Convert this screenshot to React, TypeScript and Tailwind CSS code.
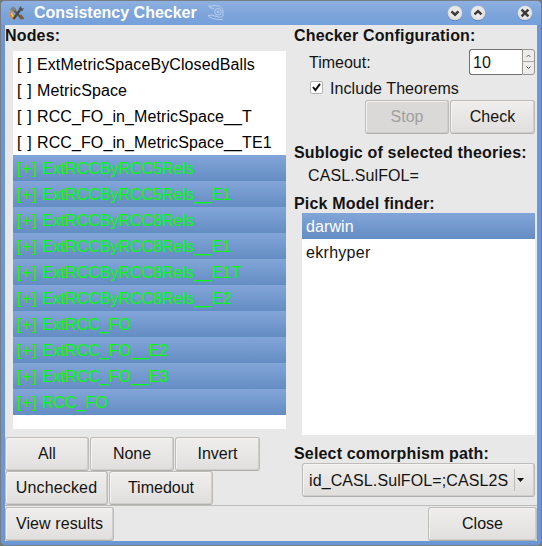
import type { ReactNode } from "react";

const openNodes = [
  "ExtMetricSpaceByClosedBalls",
  "MetricSpace",
  "RCC_FO_in_MetricSpace__T",
  "RCC_FO_in_MetricSpace__TE1",
];

const provedNodes = [
  "ExtRCCByRCC5Rels",
  "ExtRCCByRCC5Rels__E1",
  "ExtRCCByRCC8Rels",
  "ExtRCCByRCC8Rels__E1",
  "ExtRCCByRCC8Rels__E1T",
  "ExtRCCByRCC8Rels__E2",
  "ExtRCC_FO",
  "ExtRCC_FO__E2",
  "ExtRCC_FO__E3",
  "RCC_FO",
];

function Button({ className, children, disabled = false }: { className: string; children: ReactNode; disabled?: boolean }) {
  return (
    <button
      disabled={disabled}
      className={`${className} h-[34px] shrink-0 rounded-[3px] border border-[#bdbcb9] border-b-[#b0afac] text-center whitespace-nowrap shadow-[inset_1px_1px_0_#f4f3f2,inset_-1px_-1px_0_#cfcecb] ${
        disabled ? "bg-[#dad9d7] text-[#a09f9d]" : "bg-linear-to-b from-[#efeeed] to-[#e0dfdd]"
      }`}
    >
      {children}
    </button>
  );
}

function Heading({ className = "", children }: { className?: string; children: ReactNode }) {
  return <h2 className={`${className} h-5 shrink-0 leading-5 font-bold tracking-[0.17px] whitespace-nowrap`}>{children}</h2>;
}

function TitleButton({ path, className }: { path: string; className: string }) {
  return (
    <svg className={`${className} size-4 shrink-0`} viewBox="0 0 16 16">
      <circle cx="8" cy="8.9" r="7.2" fill="#456da8" opacity="0.65" />
      <circle cx="8" cy="8" r="7.3" fill="#dfdedc" />
      <circle cx="8" cy="7.2" r="6" fill="#eeedeb" opacity="0.7" />
      <path d={path} fill="none" stroke="#3a3a3a" strokeWidth="2.5" />
    </svg>
  );
}

export default function App() {
  return (
    <div className="flex h-[546px] w-[542px] flex-col overflow-hidden bg-[#777]">
      <div className="flex h-[546px] flex-col rounded-[5px] border border-[#777d86] bg-[#6b98d5] px-1 pb-1 font-['Liberation_Sans',Arial,sans-serif] text-[16px] text-[#141312]">
        <header className="-mx-1 flex h-6 shrink-0 items-center rounded-t bg-linear-to-b from-[#8eb0df] via-[#7ea5db] to-[#75a0da] pl-2">
          <svg className="size-4 shrink-0" viewBox="0 0 16 16">
            <path d="M3 6 C0 9 2 13 6 14" fill="none" stroke="#e88630" strokeWidth="2" />
            <path d="M2.5 8 L4.5 12.5" stroke="#f4d34c" strokeWidth="1.3" />
            <path d="M4 4 L13 14" stroke="#695d4c" strokeWidth="2.6" />
            <path d="M12.5 3 L4.5 14" stroke="#464a49" strokeWidth="2.4" />
            <path d="M1 4.5 L4 1.5 L7.5 4 L4.5 6.5 Z" fill="#81807b" />
            <path d="M10 3 L12 1 L12.5 4 L15 3 L13.5 6 L10.5 6 Z" fill="#555" />
            <path d="M11.5 10 L14.5 14" stroke="#8b562e" strokeWidth="2" />
          </svg>
          <h1 className="ml-[9px] w-[165px] shrink-0 font-bold whitespace-nowrap text-white">Consistency Checker</h1>
          <svg className="ml-2 h-4 w-[18px] shrink-0" viewBox="0 0 18 16" fill="none" stroke="#b9cfed" strokeWidth="1">
            <path d="M1.5 1 C4 1 5 0.7 8 0.7 C13 0.7 16 3 16 7 V10 C16 12 14 12.5 11 12 C7 11 5 9.5 1 10.5 M1.5 1 C2.5 3.5 5 3 7 3.5 M1 10.5 C4 14 10 14.8 16 14.5" />
            <circle cx="11" cy="6.8" r="3.3" />
            <circle cx="11" cy="6.8" r="1" />
          </svg>
          <TitleButton className="ml-[222px]" path="M4.5 6.4 L8 9.7 L11.5 6.4" />
          <TitleButton className="ml-[7px]" path="M4.5 9.4 L8 6.1 L11.5 9.4" />
          <TitleButton className="ml-[31px]" path="M4.6 4.6 L11.4 11.4 M11.4 4.6 L4.6 11.4" />
        </header>

        <div className="flex h-[516px] w-[532px] shrink-0 flex-col bg-[#e8e8e8]">
          <main className="flex h-[480px] shrink-0">
            <section className="w-[281px] shrink-0 pt-px">
              <Heading>Nodes:</Heading>
              <div className="mt-[5px] ml-2 h-[378px] w-[273px] bg-white">
                {openNodes.map((n) => (
                  <div key={n} className="flex h-[26px] pl-1 leading-[28px] whitespace-pre text-black">
                    <span className="w-5 tracking-[0.7px]">[ ]</span>
                    <span className="tracking-[0.1px]">{n}</span>
                  </div>
                ))}
                {provedNodes.map((n) => (
                  <div key={n} className="flex h-[26px] bg-linear-to-b from-[#82a5d8] to-[#648dc3] pl-1 leading-[28px] whitespace-pre text-[#00ff00]">
                    <span className="w-[25px] tracking-[0.8px]">[+]</span>
                    <span>{n}</span>
                  </div>
                ))}
              </div>
              <div className="mt-2 flex gap-px">
                <Button className="w-[84px]">All</Button>
                <Button className="w-[84px]">None</Button>
                <Button className="w-[85px]">Invert</Button>
              </div>
              <div className="flex gap-px">
                <Button className="w-[103px] tracking-[0.15px]">Unchecked</Button>
                <Button className="w-[104px]">Timedout</Button>
              </div>
            </section>

            <section className="ml-2 flex w-[243px] shrink-0 flex-col pt-px">
              <Heading>Checker Configuration:</Heading>
              <div className="mt-[3px] flex h-[26px] w-[241px] shrink-0 justify-between pl-[15px]">
                <span className="leading-[28px]">Timeout:</span>
                <div className="flex h-[26px]">
                  <div className="w-[53px] rounded-l-[3px] border border-r-0 border-[#72716e] bg-white pl-[3px] leading-[26px]">10</div>
                  <div className="flex w-[13px] flex-col rounded-r-[3px] border border-[#969592] bg-[#edeceb]">
                    <svg className="h-3 w-[11px] border-b border-[#aaa9a6]" viewBox="0 0 11 12" fill="none" stroke="#444">
                      <path d="M3.5 7.5 L5.5 5.5 L7.5 7.5" />
                    </svg>
                    <svg className="h-3 w-[11px]" viewBox="0 0 11 12" fill="none" stroke="#444">
                      <path d="M3.5 4.5 L5.5 6.5 L7.5 4.5" />
                    </svg>
                  </div>
                </div>
              </div>
              <label className="mt-[3px] flex h-5 shrink-0 items-center pl-4">
                <svg className="-mt-0.5 size-[13px]" viewBox="0 0 13 13">
                  <rect x="0.5" y="0.5" width="12" height="12" rx="1.5" fill="#fff" stroke="#b5b4b1" />
                  <path d="M3 6 L5.4 9 L10 2.8" fill="none" stroke="#111" strokeWidth="2" />
                </svg>
                <span className="ml-[7px] pt-px tracking-[0.07px]">Include Theorems</span>
              </label>
              <div className="mt-0.5 flex w-[241px] shrink-0 justify-end gap-px">
                <Button className="w-[84px]" disabled>Stop</Button>
                <Button className="w-[85px]">Check</Button>
              </div>
              <Heading className="mt-[9px]">Sublogic of selected theories:</Heading>
              <div className="mt-[3px] ml-3.5 h-5 shrink-0 leading-5 tracking-[0.1px]">CASL.SulFOL=</div>
              <Heading className="mt-2">Pick Model finder:</Heading>
              <div className="-mt-px ml-2 h-[222px] w-[233px] shrink-0 bg-white">
                <div className="h-[26px] bg-linear-to-b from-[#82a5d8] to-[#648dc3] pl-1 leading-[28px] tracking-[0.1px] text-white">darwin</div>
                <div className="h-[26px] pl-1 leading-[28px] tracking-[0.3px]">ekrhyper</div>
              </div>
              <Heading className="mt-[9px]">Select comorphism path:</Heading>
              <Button className="-mt-px ml-2 w-[233px]">
                <span className="flex items-center">
                  <span className="ml-1.5 w-[199px] overflow-hidden pt-px text-left tracking-[0.1px]">id_CASL.SulFOL=;CASL2S</span>
                  <span className="ml-1.5 h-[22px] w-px bg-[#bdbcb9]" />
                  <svg className="ml-0.5 h-1 w-[7px]" viewBox="0 0 7 4">
                    <path d="M0 0 H7 L3.5 4 Z" fill="#111" />
                  </svg>
                </span>
              </Button>
            </section>
          </main>
          <hr className="h-px w-full shrink-0 border-0 bg-[#bdbdbb]" />
          <footer className="mt-px flex justify-between">
            <Button className="w-[109px] tracking-[0.1px]">View results</Button>
            <Button className="w-[109px]">Close</Button>
          </footer>
        </div>
      </div>
    </div>
  );
}
